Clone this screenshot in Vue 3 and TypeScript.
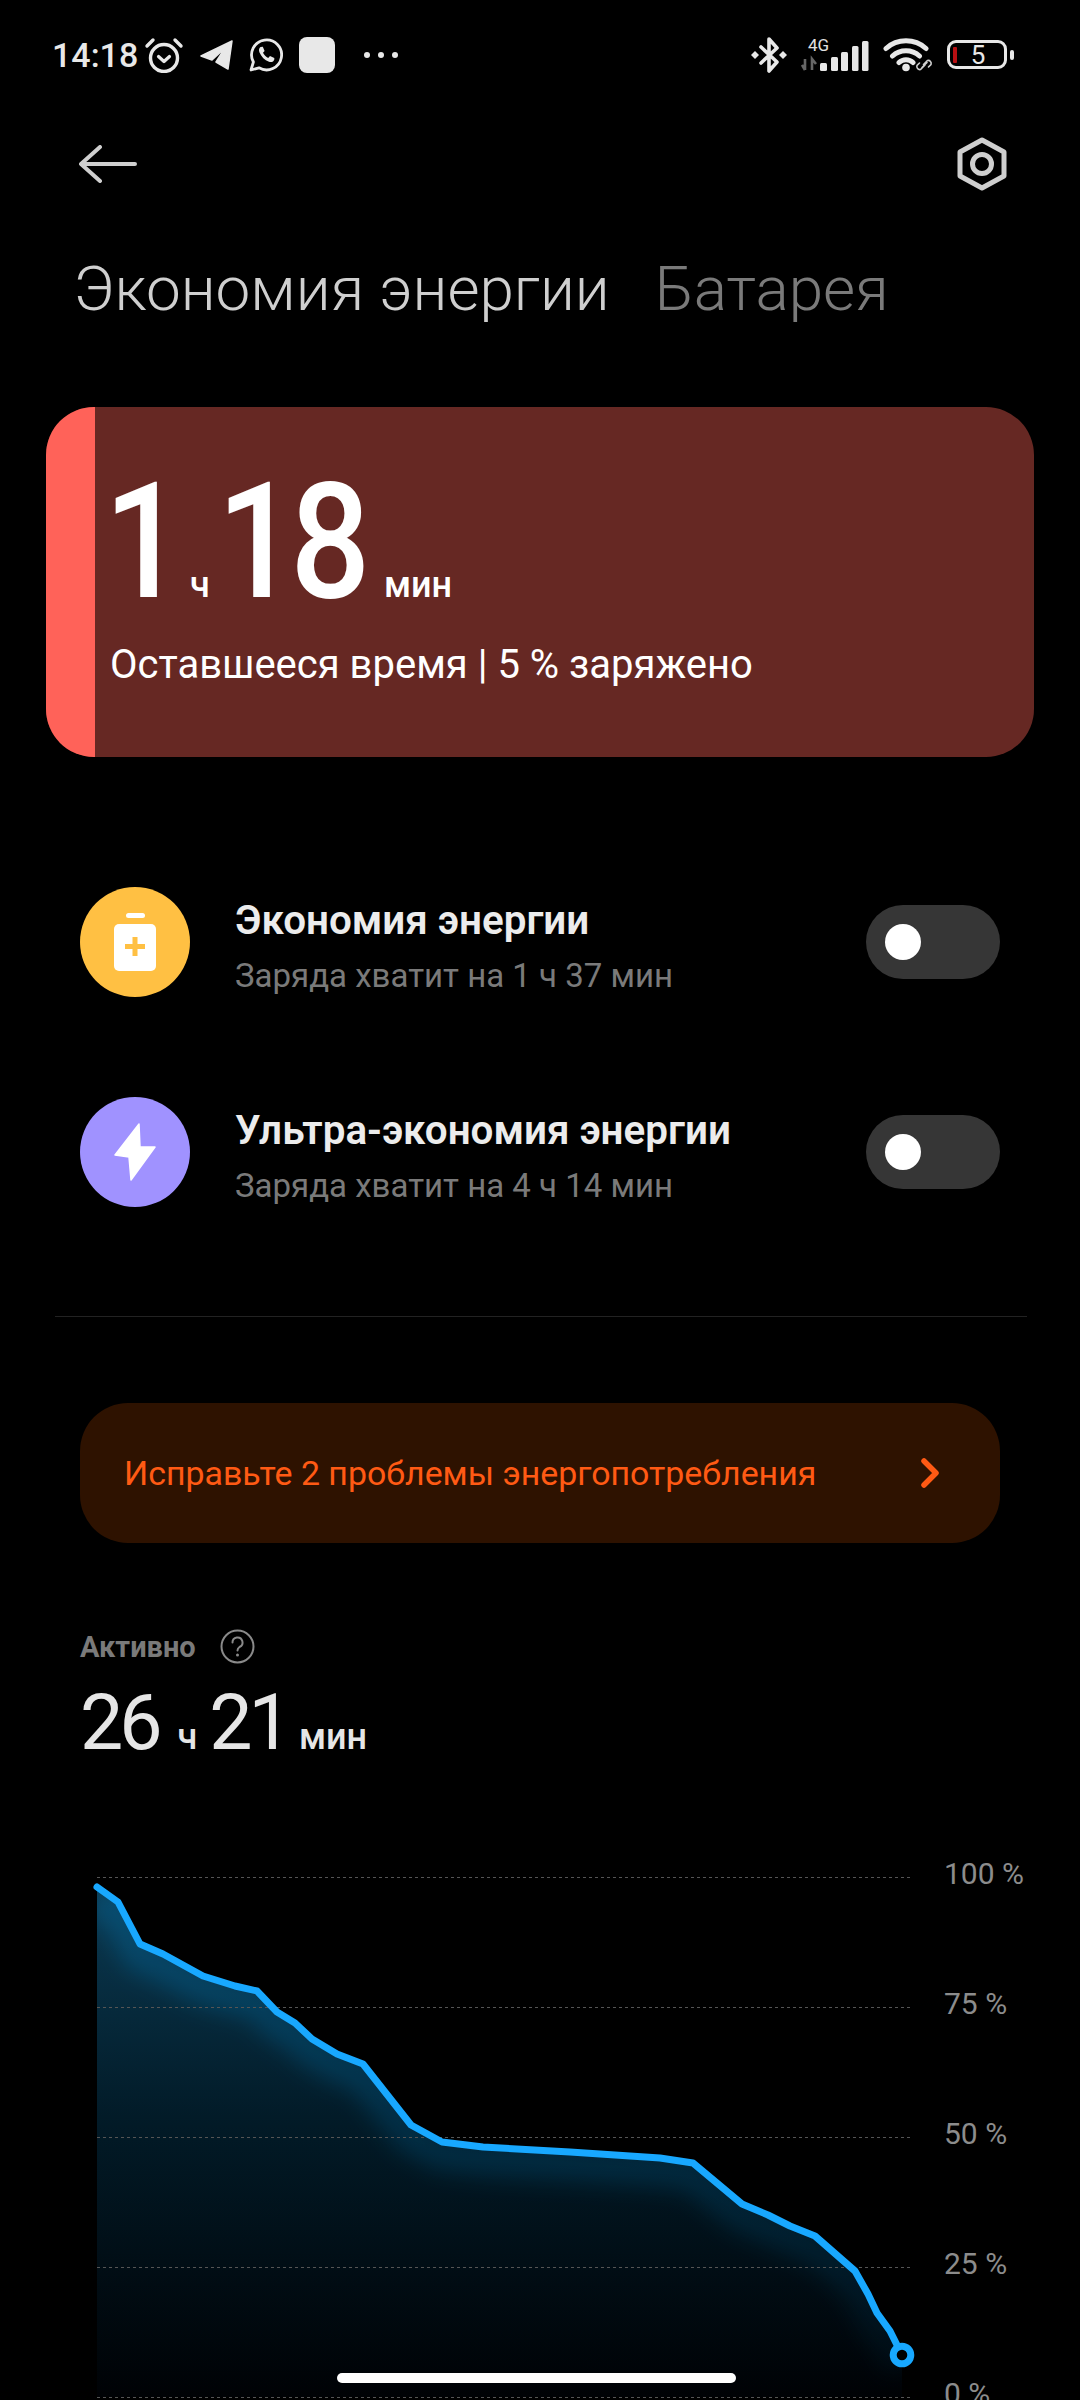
<script setup lang="ts">
import { computed } from "vue";

type Mode = { title: string; sub: string; kind: "save" | "ultra" };

const modes: Mode[] = [
  { title: "Экономия энергии", sub: "Заряда хватит на 1 ч 37 мин", kind: "save" },
  { title: "Ультра-экономия энергии", sub: "Заряда хватит на 4 ч 14 мин", kind: "ultra" },
];

// chart coordinates are page coordinates, the viewBox starts at y=1860
const curve: [number, number][] = [
  [97, 1887], [118, 1902], [140, 1944], [163, 1954], [203, 1976], [235, 1986], [257, 1991],
  [277, 2012], [295, 2023], [312, 2039], [337, 2054], [363, 2064], [411, 2125],
  [442, 2142], [483, 2147], [570, 2152], [660, 2158], [693, 2163], [742, 2204], [768, 2215],
  [790, 2226], [815, 2236], [855, 2271], [868, 2294], [877, 2313], [890, 2331], [902, 2355],
];

const grid = [
  { y: 1877, label: "100 %" },
  { y: 2007, label: "75 %" },
  { y: 2137, label: "50 %" },
  { y: 2267, label: "25 %" },
  { y: 2397, label: "0 %" },
];

const linePoints = computed(() => curve.map((p) => p.join(",")).join(" "));
const areaPoints = computed(() => `97,2397 ${linePoints.value} 902,2397`);
</script>

<template>
  <div class="page">
    <div class="status">
      <div class="status-left">
        <span class="time">14:18</span>
        <svg class="alarm" width="40" height="36" viewBox="0 0 40 36" fill="none" stroke="#e8e8e8">
          <circle cx="20" cy="21" r="13.5" stroke-width="3.4" />
          <path d="M3 9 L9 3 M37 9 L31 3" stroke-width="3.4" stroke-linecap="round" />
          <path d="M14.5 19.5 L20 24.5 L25.5 19.5" stroke-width="3.2" stroke-linecap="round" stroke-linejoin="round" />
        </svg>
        <svg width="33" height="30" viewBox="0 0 33 30" fill="#e8e8e8" stroke="#e8e8e8" stroke-width="1.5" stroke-linejoin="round">
          <path d="M32 1 L1 16 L12 20 L25 8 L16 22 L28 29 Z" />
        </svg>
        <svg width="34" height="34" viewBox="0 0 34 34" fill="none">
          <path d="M2 32 L4.4 24 A15 15 0 1 1 10 29.8 Z" stroke="#e8e8e8" stroke-width="2.8" stroke-linejoin="round" />
          <path d="M11.5 9 C10 10 9.5 12 10.5 14.5 C12.5 19 15.5 22 20 23.8 C22.5 24.6 24.8 23.6 25.3 21.5 L25.3 20 L21 18 L19.2 20 C17 19 15 17 14 14.8 L15.6 13 L13.8 8.8 Z" fill="#e8e8e8" />
        </svg>
        <div class="square"></div>
        <div class="dots"><i></i><i></i><i></i></div>
      </div>
      <div class="status-right">
        <svg width="36" height="38" viewBox="0 0 36 38" fill="none">
          <path d="M10 11 L26 26 L18 35 V3 L26 12 L10 27" stroke="#e8e8e8" stroke-width="3.6" stroke-linejoin="round" stroke-linecap="round" />
          <path d="M4 15 L8 19 L4 23 L0 19 Z M32 15 L36 19 L32 23 L28 19 Z" fill="#e8e8e8" />
        </svg>
        <svg width="68" height="34" viewBox="0 0 68 34">
          <text class="net" x="7" y="13">4G</text>
          <path d="M4 21 V32 M1 27 L4 32 M11 32 V21 L15 26" stroke="#666" stroke-width="2.6" fill="none" />
          <g fill="#e8e8e8">
            <rect x="19" y="25" width="7" height="8" rx="1.5" />
            <rect x="30" y="19" width="7" height="14" rx="1.5" />
            <rect x="40" y="14" width="7" height="19" rx="1.5" />
            <rect x="51" y="8" width="6.5" height="25" rx="1.5" />
            <rect x="61" y="3" width="6.5" height="30" rx="1.5" />
          </g>
        </svg>
        <svg width="50" height="34" viewBox="0 0 50 34" fill="none">
          <path d="M3 10.500 A30 30 0 0 1 43 10.500 M9.500 18 A20 20 0 0 1 36.500 18 M16 24.500 A10 10 0 0 1 30 24.500" stroke="#e8e8e8" stroke-width="5" stroke-linecap="round" />
          <circle cx="23" cy="29.500" r="3.800" fill="#e8e8e8" />
          <path d="M40.500 26.500 L44.500 22.500 A3 3 0 0 1 48 26.500 L45.500 29 M42 27 L37.500 31.500 A3 3 0 0 1 34 27.500 L36.500 25 M39 29.500 L44 24.500" stroke="#cfcfcf" stroke-width="1.6" stroke-linecap="round" />
        </svg>
        <svg width="67" height="30" viewBox="0 0 67 30" fill="none">
          <rect x="1.5" y="1.5" width="57" height="26" rx="7.5" stroke="#e8e8e8" stroke-width="3" />
          <rect x="6" y="7" width="4" height="16" rx="1" fill="#b80f12" />
          <text class="batt" x="31" y="24" text-anchor="middle">5</text>
          <rect x="63" y="10" width="4" height="10" rx="2" fill="#e8e8e8" />
        </svg>
      </div>
    </div>

    <div class="topbar">
      <svg width="58" height="38" viewBox="0 0 58 38" fill="none" stroke="#cfcfcf" stroke-width="4" stroke-linecap="round" stroke-linejoin="round">
        <path d="M56 19 H3 M21 2 L2 19 L21 36" />
      </svg>
      <svg width="50" height="54" viewBox="0 0 50 54" fill="none" stroke="#cfcfcf" stroke-width="5">
        <path d="M25 3 L47 15 V39 L25 51 L3 39 V15 Z" stroke-linejoin="round" />
        <circle cx="25" cy="27" r="9.5" />
      </svg>
    </div>

    <div class="tabs">
      <span class="tab on">Экономия энергии</span>
      <span class="tab">Батарея</span>
    </div>

    <div class="card">
      <div class="stripe"></div>
      <div class="card-body">
        <div class="remain">
          <span class="num">1</span><span class="unit u1">ч</span><span class="num n2">18</span><span class="unit u2">мин</span>
        </div>
        <div class="remain-sub">Оставшееся время | 5 % заряжено</div>
      </div>
    </div>

    <div class="modes">
      <div v-for="m in modes" :key="m.kind" class="mode">
        <div class="mode-icon" :class="m.kind">
          <svg v-if="m.kind === 'save'" width="42" height="58" viewBox="0 0 42 58">
            <rect x="12" y="0" width="19" height="5" rx="2.5" fill="#fff" />
            <rect x="0" y="11" width="42" height="47" rx="5" fill="#fff" />
            <path d="M21 24 V43 M11 33.500 H31" stroke="#ffc043" stroke-width="5" />
          </svg>
          <svg v-else width="42" height="58" viewBox="0 0 42 58">
            <path d="M25 1 L1 32 L15 34 L17 57 L41 24 L26 24 Z" fill="#fff" stroke="#fff" stroke-width="1.5" stroke-linejoin="round" />
          </svg>
        </div>
        <div class="mode-text">
          <div class="mode-title">{{ m.title }}</div>
          <div class="mode-sub">{{ m.sub }}</div>
        </div>
        <div class="toggle"><div class="knob"></div></div>
      </div>
    </div>

    <div class="divider"></div>

    <div class="alert">
      <span>Исправьте 2 проблемы энергопотребления</span>
      <svg width="20" height="30" viewBox="0 0 20 30" fill="none">
        <path d="M4 3 L16 15 L4 27" stroke="#ff5a14" stroke-width="5.500" stroke-linecap="round" stroke-linejoin="round" />
      </svg>
    </div>

    <div class="active">
      <div class="active-head">
        <span>Активно</span>
        <svg width="35" height="35" viewBox="0 0 35 35" fill="none" stroke="#8a8a8a">
          <circle cx="17.5" cy="17.500" r="16" stroke-width="2" />
          <path d="M12.500 13.500 A5 5 0 1 1 19.500 18 C18 19 17.500 20 17.500 21.500" stroke-width="2" stroke-linecap="round" />
          <circle cx="17.500" cy="26" r="1.500" fill="#8a8a8a" stroke="none" />
        </svg>
      </div>
      <div class="active-time">
        <span class="anum">26</span><span class="aunit au1">ч</span><span class="anum an2">21</span><span class="aunit au2">мин</span>
      </div>
    </div>

    <svg class="chart" width="1080" height="560" viewBox="0 1860 1080 560">
      <defs>
        <linearGradient id="areaFill" x1="0" y1="1887" x2="0" y2="2397" gradientUnits="userSpaceOnUse">
          <stop offset="0" stop-color="#0b3a52" />
          <stop offset="0.45" stop-color="#021b28" />
          <stop offset="1" stop-color="#000205" />
        </linearGradient>
        <linearGradient id="glowFill" x1="0" y1="1887" x2="0" y2="2397" gradientUnits="userSpaceOnUse">
          <stop offset="0" stop-color="#18a8ff" stop-opacity="0.2" />
          <stop offset="0.5" stop-color="#18a8ff" stop-opacity="0.14" />
          <stop offset="1" stop-color="#18a8ff" stop-opacity="0.03" />
        </linearGradient>
        <filter id="blur" x="-10%" y="-10%" width="120%" height="120%">
          <feGaussianBlur stdDeviation="11" />
        </filter>
        <clipPath id="areaClip"><polygon :points="areaPoints" /></clipPath>
      </defs>
      <polygon :points="areaPoints" fill="url(#areaFill)" />
      <g clip-path="url(#areaClip)">
        <polyline :points="linePoints" transform="translate(0 12)" fill="none" stroke="url(#glowFill)" stroke-width="34" filter="url(#blur)" />
      </g>
      <g v-for="g in grid" :key="g.y">
        <line x1="97" x2="913" :y1="g.y + 0.5" :y2="g.y + 0.5" stroke="#555" stroke-width="1" stroke-dasharray="3 3" />
        <text class="tick" x="944" :y="g.y + 7">{{ g.label }}</text>
      </g>
      <polyline :points="linePoints" fill="none" stroke="#18a8ff" stroke-width="7" stroke-linejoin="round" stroke-linecap="round" />
      <circle cx="902" cy="2355" r="8.800" fill="#000" stroke="#18a8ff" stroke-width="7" />
    </svg>

    <div class="home"></div>
  </div>
</template>

<style>
html,
body {
  margin: 0;
  background: #000;
}
</style>

<style scoped>
.page {
  position: relative;
  width: 1080px;
  height: 2400px;
  overflow: hidden;
  background: #000;
  color: #fff;
  font-family: Roboto, "Noto Sans", sans-serif;
}

/* STATUS BAR */
.status {
  height: 110px;
  padding: 0 66px 0 52px;
  display: flex;
  align-items: center;
  justify-content: space-between;
}
.status-left,
.status-right {
  display: flex;
  align-items: center;
}
.status-left {
  gap: 16px;
}
.status-right {
  gap: 14px;
}
.time {
  font-size: 34px;
  font-weight: 500;
  color: #e8e8e8;
  margin-right: -10.5px;
}
.square {
  width: 36px;
  height: 36px;
  border-radius: 8px;
  background: #e8e8e8;
}
.dots {
  display: flex;
  gap: 8px;
  margin-left: 13px;
}
.dots i {
  width: 6px;
  height: 6px;
  border-radius: 50%;
  background: #e8e8e8;
}
.net {
  font-size: 17px;
  fill: #e0e0e0;
}
.batt {
  font-size: 26px;
  fill: #e8e8e8;
}

/* HEADER */
.topbar {
  margin-top: 27px;
  height: 54px;
  padding: 0 73px 0 79px;
  display: flex;
  align-items: center;
  justify-content: space-between;
}
.tabs {
  margin-top: 63px;
  padding-left: 73.5px;
  display: flex;
  gap: 45px;
  font-size: 62px;
  line-height: 70px;
  font-weight: 300;
}
.tab {
  color: #7a7a7a;
}
.tab.on {
  color: #cfcfcf;
}

/* BATTERY CARD */
.card {
  margin: 83px 0 0 46px;
  width: 988px;
  height: 350px;
  border-radius: 48px;
  overflow: hidden;
  display: flex;
  background: #662823;
}
.stripe {
  width: 49px;
  background: #ff6259;
}
.card-body {
  padding: 62px 0 0 15px;
}
.remain {
  display: flex;
  align-items: baseline;
  height: 146px;
  line-height: 146px;
}
.num {
  font-size: 162px;
  font-weight: 500;
  letter-spacing: -8px;
  transform: scaleX(0.87);
  transform-origin: left center;
  margin-left: -6px;
}
.unit {
  font-size: 36px;
  font-weight: 500;
}
.u1 {
  margin-left: 2px;
}
.n2 {
  margin-left: 7px;
}
.u2 {
  margin-left: -1px;
}
.remain-sub {
  margin-top: 27px;
  font-size: 40px;
  line-height: 46px;
}

/* MODES */
.modes {
  margin-top: 130px;
  padding: 0 80px;
  display: flex;
  flex-direction: column;
  gap: 100px;
}
.mode {
  height: 110px;
  display: flex;
  align-items: center;
}
.mode-icon {
  flex: none;
  width: 110px;
  height: 110px;
  border-radius: 50%;
  display: flex;
  align-items: center;
  justify-content: center;
}
.mode-icon.save {
  background: #ffc043;
}
.mode-icon.ultra {
  background: #a092ff;
}
.mode-text {
  flex: 1;
  margin-left: 45px;
  padding-top: 10px;
}
.mode-title {
  font-size: 40.4px;
  line-height: 46px;
  font-weight: 600;
  color: #ececec;
}
.mode-sub {
  margin-top: 12px;
  font-size: 33px;
  line-height: 40px;
  color: #7a7a7a;
}
.toggle {
  flex: none;
  width: 134px;
  height: 74px;
  border-radius: 37px;
  background: #363636;
  display: flex;
  align-items: center;
  padding-left: 19px;
  box-sizing: border-box;
}
.knob {
  width: 36px;
  height: 36px;
  border-radius: 50%;
  background: #fff;
}

.divider {
  margin: 109px 53px 0 55px;
  height: 1px;
  background: #222;
}

/* ALERT */
.alert {
  margin: 86px 80px 0;
  height: 140px;
  padding: 0 60px 0 44px;
  border-radius: 48px;
  background: #2e1200;
  display: flex;
  align-items: center;
  justify-content: space-between;
  color: #ff5a14;
  font-size: 33.9px;
}

/* ACTIVE TIME */
.active {
  margin: 86px 0 0 80px;
}
.active-head {
  height: 35px;
  display: flex;
  align-items: center;
  gap: 24px;
  color: #7a7a7a;
  font-size: 29px;
  font-weight: 700;
}
.active-time {
  margin-top: 19px;
  display: flex;
  align-items: baseline;
  height: 80px;
  line-height: 80px;
  color: #e6e6e6;
}
.anum {
  font-size: 77px;
  letter-spacing: -4px;
}
.aunit {
  font-size: 36px;
  font-weight: 500;
}
.au1 {
  margin-left: 19px;
}
.an2 {
  margin-left: 12px;
}
.au2 {
  margin-left: 11px;
}

/* CHART */
.chart {
  display: block;
  position: absolute;
  left: 0;
  top: 1860px;
}
.tick {
  font-size: 30px;
  fill: #8c8c8c;
}

.home {
  position: absolute;
  left: 337px;
  top: 2373px;
  width: 399px;
  height: 10px;
  border-radius: 5px;
  background: #fff;
}
</style>
